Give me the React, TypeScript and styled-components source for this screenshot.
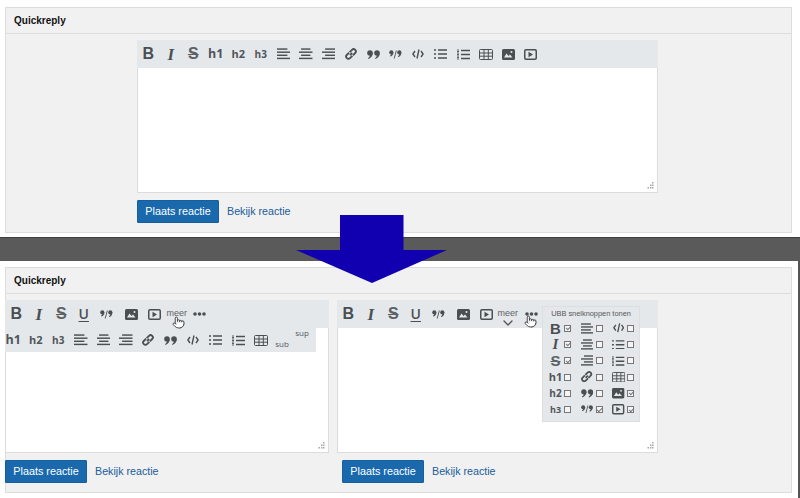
import React from "react";
import styled, { createGlobalStyle } from "styled-components";
import { Pointer, ChevronDown } from "lucide-react";

const Global = createGlobalStyle`
  html, body { margin: 0; padding: 0; background: #fff; }
  body { font-family: "Liberation Sans", Arial, sans-serif; }
  * { box-sizing: border-box; }
`;

const Page = styled.div`
  position: relative;
  width: 800px;
  height: 498px;
  overflow: hidden;
  background: #fff;
  display: flex;
  flex-direction: column;
`;
const TopSection = styled.section`
  height: 237px;
  padding: 7px 8px 4px 5px;
`;
const Band = styled.div`
  height: 24px;
  flex: none;
  background: #5a5a5a;
  border-top: 1px solid #3f3f3f;
`;
const BottomSection = styled.section`
  flex: 1;
  padding: 6px 6px 5px 5px;
  border-right: 2px solid #555;
`;
const Panel = styled.div`
  height: 100%;
  background: #f1f1f1;
  border: 1px solid #dddddd;
`;
const PanelHeader = styled.h2`
  margin: 0;
  height: 26px;
  padding: 0 8px;
  display: flex;
  align-items: center;
  font-size: 10px;
  font-weight: 700;
  color: #111;
  border-bottom: 1px solid #dddddd;
`;
const TopBody = styled.div`
  padding: 6px 0 0 131px;
`;
const BottomBody = styled.div`
  display: flex;
  gap: 8px;
  margin-left: -1px;
  padding-top: 6px;
`;
const Column = styled.div<{ $w: number }>`
  width: ${(p) => p.$w}px;
`;
const Editor = styled.div<{ $w: number; $h: number }>`
  position: relative;
  width: ${(p) => p.$w}px;
  height: ${(p) => p.$h}px;
  background: #fff;
  border: 1px solid #dcdcdc;
  border-top: 0;
`;
const Toolbar = styled.div<{ $w?: number; $h?: number }>`
  display: flex;
  align-items: center;
  height: ${(p) => p.$h ?? 28}px;
  width: ${(p) => (p.$w ? `${p.$w}px` : "auto")};
  margin: 0 -1px;
  background: #e5e8eb;
  & > :first-child.tight { margin-left: -3px; }
`;
const Btn = styled.span<{ $gap?: number; $w?: number }>`
  position: relative;
  flex: none;
  width: ${(p) => p.$w ?? 22.5}px;
  margin-left: ${(p) => p.$gap ?? 0}px;
  height: 100%;
  display: flex;
  align-items: center;
  justify-content: center;
  color: #4a4f53;
  svg { display: block; }
`;
const glyphFont: Record<string, string> = {
  b: '700 16px "Liberation Sans", sans-serif',
  i: 'italic 700 17px "Liberation Serif", serif',
  s: '600 16px "Liberation Sans", sans-serif',
  u: '600 14px "Open Sans", sans-serif',
};
const Glyph = styled.span<{ $kind: string; $small?: boolean }>`
  font: ${(p) => glyphFont[p.$kind]};
  ${(p) => (p.$small ? "font-size: 15px;" : "")}
  line-height: 1;
  color: ${(p) => (p.$kind === "s" ? "#5c6166" : "#4a4f53")};
  text-decoration: ${(p) => (p.$kind === "s" ? "line-through" : p.$kind === "u" ? "underline" : "none")};
  text-decoration-thickness: 1px;
  text-underline-offset: 2px;
`;
const Heading = styled.span<{ $size: number }>`
  font-family: "Open Sans", sans-serif;
  font-weight: 700;
  font-size: ${(p) => p.$size}px;
  line-height: 14px;
  height: 14px;
  color: #50555a;
`;
const More = styled.span`
  font-size: 9px;
  color: #5e6266;
  margin-top: -3px;
`;
const Script = styled.span<{ $up?: boolean }>`
  font-family: "Open Sans", sans-serif;
  font-size: 8px;
  color: #53585c;
  transform: translateY(${(p) => (p.$up ? -8 : 3)}px);
`;
const Hand = styled.span<{ $x: number; $y: number }>`
  position: absolute;
  left: ${(p) => p.$x}px;
  top: ${(p) => p.$y}px;
  display: block;
  line-height: 0;
  color: #222;
`;
const Chevron = styled.span`
  position: absolute;
  left: 3px;
  top: 15px;
  line-height: 0;
  color: #555;
`;
const Grip = styled.svg`
  position: absolute;
  right: 3px;
  bottom: 3px;
`;
const Actions = styled.div<{ $indent: number; $top: number }>`
  display: flex;
  align-items: center;
  gap: 8px;
  margin: ${(p) => p.$top}px 0 0 ${(p) => p.$indent}px;
`;
const SubmitButton = styled.button`
  width: 82px;
  height: 23px;
  padding: 0 0 1px;
  background: #1a69ad;
  border: 1px solid #155f9f;
  border-radius: 1px;
  color: #fff;
  font-family: "Liberation Sans", sans-serif;
  font-size: 10.8px;
`;
const ViewLink = styled.a`
  font-size: 10.7px;
  color: #205c9a;
  margin-top: -1px;
`;
const Arrow = styled.svg`
  position: absolute;
  left: 296px;
  top: 215px;
`;
const Popup = styled.div`
  position: absolute;
  left: 204px;
  top: 6px;
  width: 98px;
  height: 116px;
  background: #e5e8eb;
  border: 1px solid #dcdfe2;
  padding: 2px 0 0;
`;
const PopupTitle = styled.div`
  font-family: "Liberation Sans", sans-serif;
  font-size: 7.4px;
  line-height: 9px;
  color: #555;
  text-align: center;
  margin-bottom: 2px;
`;
const PopupGrid = styled.div`
  display: grid;
  grid-template-columns: 31.5px 31.5px 31.5px;
  grid-auto-flow: column;
  grid-template-rows: repeat(6, 16.3px);
`;
const Option = styled.div`
  display: flex;
  align-items: center;
  padding-left: 4px;
`;
const OptionIcon = styled.span`
  width: 17px;
  height: 14px;
  display: flex;
  align-items: center;
  justify-content: center;
  flex: none;
  svg { display: block; }
  color: #4a4f53;
`;
const Check = styled.span<{ $on?: boolean }>`
  width: 7px;
  height: 7px;
  flex: none;
  border: 1px solid #777;
  background: #f4f4f4;
  position: relative;
  &::after {
    content: "";
    display: ${(p) => (p.$on ? "block" : "none")};
    position: absolute;
    left: 1.5px;
    top: -0.5px;
    width: 2px;
    height: 4px;
    border: solid #777;
    border-width: 0 1px 1px 0;
    transform: rotate(45deg);
  }
`;

type Name =
  | "b" | "i" | "s" | "u" | "h1" | "h2" | "h3" | "left" | "center" | "right" | "link" | "quote"
  | "spoiler" | "code" | "ul" | "ol" | "table" | "image" | "video" | "dots";

const Lines = ({ kind, s }: { kind: "left" | "center" | "right"; s: number }) => {
  const rows = kind === "left"
    ? [[0, 10], [0, 13], [0, 10], [0, 13]]
    : kind === "center"
    ? [[2, 9], [0, 13], [2, 9], [0, 13]]
    : [[3, 10], [0, 13], [3, 10], [0, 13]];
  return (
    <svg width={s} height={s * 0.85} viewBox="0 0 13 11" fill="none" stroke="currentColor" strokeWidth="1.4">
      {rows.map(([x, w], i) => (
        <path key={i} d={`M${x} ${1 + i * 3}h${w}`} />
      ))}
    </svg>
  );
};

const Svg = ({ name, s = 1 }: { name: Name; s?: number }) => {
  switch (name) {
    case "left":
    case "center":
    case "right":
      return <Lines kind={name} s={13.5 * s} />;
    case "link":
      return (
        <svg width={14 * s} height={14 * s} viewBox="0 0 14 14" fill="none" stroke="currentColor" strokeWidth="1.8">
          <path d="M6 8.2 8.2 6" />
          <path d="M5.6 5.2 8 2.8a2.1 2.1 0 0 1 3.2 3.2L8.900 8.300" />
          <path d="M8.400 8.800 6 11.200A2.100 2.100 0 0 1 2.800 8l2.300-2.300" />
        </svg>
      );
    case "quote":
      return (
        <svg width={13 * s} height={9 * s} viewBox="0 0 13 9" fill="currentColor">
          <circle cx="3" cy="3" r="2.800" />
          <path d="M5.800 3C5.800 6 4 8 1.500 9L1 8c1.400-.7 2-2 2-3z" />
          <circle cx="10" cy="3" r="2.800" />
          <path d="M12.800 3c0 3-1.800 5-4.300 6L8 8c1.400-.7 2-2 2-3z" />
        </svg>
      );
    case "spoiler":
      return (
        <svg width={13 * s} height={9 * s} viewBox="0 0 13 9" fill="currentColor" stroke="none">
          <circle cx="2.300" cy="2.400" r="2.100" />
          <path d="M4.400 2.400c0 2-1 3.300-3 4.200L1 5.800c1-.5 1.300-1.200 1.300-2z" />
          <circle cx="10.300" cy="2.400" r="2.100" />
          <path d="M12.400 2.400c0 2.400-1.200 3.800-3.100 4.600l-.4-.8c1-.5 1.400-1.400 1.400-2.400z" />
          <path d="M6.900.5h.9L5.600 8.500h-.9z" />
        </svg>
      );
    case "code":
      return (
        <svg width={12 * s} height={10 * s} viewBox="0 0 12 10" fill="none" stroke="currentColor" strokeWidth="1.400">
          <path d="M3 2 .9 5 3 8M9 2l2.100 3L9 8M7 .5l-2 9" />
        </svg>
      );
    case "ul":
      return (
        <svg width={13 * s} height={10 * s} viewBox="0 0 13 10" fill="none" stroke="currentColor" strokeWidth="1.400">
          <path d="M0 1h2M4 1h9M0 5h2M4 5h9M0 9h2M4 9h9" />
        </svg>
      );
    case "ol":
      return (
        <svg width={13 * s} height={11 * s} viewBox="0 0 13 11" fill="none" stroke="currentColor">
          <path strokeWidth="1.400" d="M4 1.500h9M4 5.500h9M4 9.500h9" />
          <path strokeWidth="0.900" d="M0 1h2M0 2.500h2M0 4h2M0 5.500h2M0 7h2M0 8.500h2M0 10h2" />
        </svg>
      );
    case "table":
      return (
        <svg width={14 * s} height={11 * s} viewBox="0 0 14 11" fill="none" stroke="currentColor" strokeWidth="1">
          <rect x=".5" y=".5" width="13" height="10" rx="1" />
          <path d="M.5 4h13M.5 7.200h13M5 .5v10M9.300.5v10" />
        </svg>
      );
    case "image":
      return (
        <svg width={13 * s} height={11 * s} viewBox="0 0 13 11">
          <rect width="13" height="11" rx="1.500" fill="currentColor" />
          <path d="M2 8.500 4.500 4.500l2 2.500 1.500-1.500 2.500 3z" fill="#e5e8eb" />
          <circle cx="9.500" cy="3" r="1" fill="#e5e8eb" />
        </svg>
      );
    case "video":
      return (
        <svg width={13 * s} height={11 * s} viewBox="0 0 13 11">
          <rect x=".75" y=".75" width="11.500" height="9.500" rx="1.200" fill="none" stroke="currentColor" strokeWidth="1.500" />
          <path d="M4.500 2.800v5.400l4.500-2.700z" fill="currentColor" />
        </svg>
      );
    case "dots":
      return (
        <svg width="13" height="4" viewBox="0 0 13 4" fill="currentColor">
          <circle cx="2" cy="2" r="1.800" />
          <circle cx="6.500" cy="2" r="1.800" />
          <circle cx="11" cy="2" r="1.800" />
        </svg>
      );
    default:
      return null;
  }
};

const Icon = ({ name, small }: { name: Name; small?: boolean }) => {
  if (name === "b" || name === "i" || name === "s" || name === "u")
    return <Glyph $kind={name} $small={small}>{name.toUpperCase()}</Glyph>;
  if (name === "h1") return <Heading $size={small ? 11 : 12.5}>h1</Heading>;
  if (name === "h2") return <Heading $size={small ? 10 : 11}>h2</Heading>;
  if (name === "h3") return <Heading $size={small ? 9 : 10}>h3</Heading>;
  return <Svg name={name} s={small ? 0.95 : 1} />;
};

const ToolBtn = ({ name, gap, tight }: { name: Name; gap?: number; tight?: boolean }) => (
  <Btn $gap={gap} className={tight ? "tight" : undefined}>
    <Icon name={name} />
  </Btn>
);

const ResizeGrip = () => (
  <Grip width="7" height="7" viewBox="0 0 7 7" fill="#a8a8a8">
    <rect x="5" y="0" width="1.500" height="1.500" />
    <rect x="3" y="2.500" width="1.500" height="1.500" />
    <rect x="5" y="2.500" width="1.500" height="1.500" />
    <rect x="0.500" y="5" width="1.500" height="1.500" />
    <rect x="3" y="5" width="1.500" height="1.500" />
    <rect x="5" y="5" width="1.500" height="1.500" />
  </Grip>
);

const FormActions = ({ indent = 0, top = 7 }: { indent?: number; top?: number }) => (
  <Actions $indent={indent} $top={top}>
    <SubmitButton>Plaats reactie</SubmitButton>
    <ViewLink>Bekijk reactie</ViewLink>
  </Actions>
);

const HandCursor = ({ x, y }: { x: number; y: number }) => (
  <Hand $x={x} $y={y}>
    <Pointer size={13} fill="#fff" strokeWidth={1.5} />
  </Hand>
);

const fullRow: Name[] = ["b", "i", "s", "h1", "h2", "h3", "left", "center", "right", "link", "quote", "spoiler", "code", "ul", "ol", "table", "image", "video"];
const compact: Name[] = ["b", "i", "s", "u", "spoiler"];
const secondRow: Name[] = ["left", "center", "right", "link", "quote", "code", "ul", "ol", "table"];
const options: [Name, boolean][] = [
  ["b", true], ["i", true], ["s", true], ["h1", false], ["h2", false], ["h3", false],
  ["left", false], ["center", false], ["right", false], ["link", false], ["quote", false], ["spoiler", true],
  ["code", false], ["ul", false], ["ol", false], ["table", false], ["image", true], ["video", true],
];

const CompactButtons = ({ open }: { open?: boolean }) => (
  <>
    {compact.map((n) => <ToolBtn key={n} name={n} />)}
    <ToolBtn name="image" gap={3} />
    <ToolBtn name="video" />
    <Btn $gap={open ? -1 : 0}>
      <More>meer</More>
      {open && (
        <Chevron><ChevronDown size={16} strokeWidth={2} /></Chevron>
      )}
    </Btn>
    <ToolBtn name="dots" gap={open ? 1 : 0} />
  </>
);

export default function App() {
  return (
    <Page>
      <Global />
      <TopSection>
        <Panel>
          <PanelHeader>Quickreply</PanelHeader>
          <TopBody>
            <Editor $w={521} $h={153}>
              <Toolbar>{fullRow.map((n) => <ToolBtn key={n} name={n} />)}</Toolbar>
              <ResizeGrip />
            </Editor>
            <FormActions />
          </TopBody>
        </Panel>
      </TopSection>
      <Band />
      <BottomSection>
        <Panel>
          <PanelHeader>Quickreply</PanelHeader>
          <BottomBody>
            <Column $w={324}>
              <Editor $w={324} $h={153}>
                <Toolbar><CompactButtons /></Toolbar>
                <Toolbar $w={311} $h={24}>
                  <ToolBtn name="h1" tight />
                  <ToolBtn name="h2" />
                  <ToolBtn name="h3" />
                  {secondRow.map((n) => <ToolBtn key={n} name={n} />)}
                  <Btn $w={20}><Script>sub</Script></Btn>
                  <Btn $w={20}><Script $up>sup</Script></Btn>
                </Toolbar>
                <HandCursor x={166} y={16} />
                <ResizeGrip />
              </Editor>
              <FormActions />
            </Column>
            <Column $w={321}>
              <Editor $w={321} $h={153}>
                <Toolbar><CompactButtons open /></Toolbar>
                <HandCursor x={186} y={15} />
                <Popup>
                  <PopupTitle>UBB snelknoppen tonen</PopupTitle>
                  <PopupGrid>
                    {options.map(([n, on]) => (
                      <Option key={n}>
                        <OptionIcon><Icon name={n} small /></OptionIcon>
                        <Check $on={on} />
                      </Option>
                    ))}
                  </PopupGrid>
                </Popup>
                <ResizeGrip />
              </Editor>
              <FormActions indent={5} />
            </Column>
          </BottomBody>
        </Panel>
      </BottomSection>
      <Arrow width="152" height="69" viewBox="0 0 152 69">
        <path d="M44 0h63.500v35H151L76 68 0 35h44z" fill="#1100b0" />
      </Arrow>
    </Page>
  );
}
